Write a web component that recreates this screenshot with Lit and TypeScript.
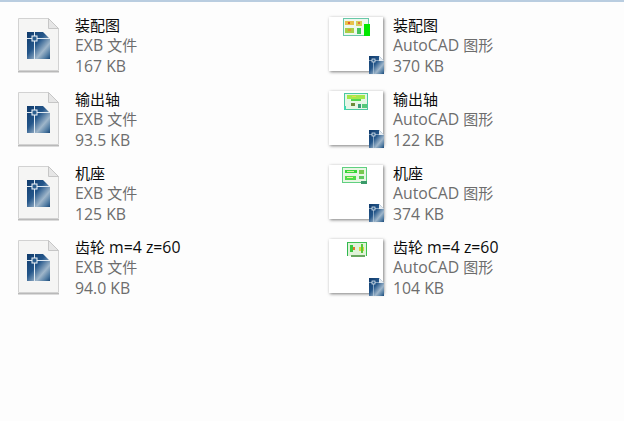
import { LitElement, html, css, svg } from "lit";
import { customElement } from "lit/decorators.js";

const blueDoc = (id: string) => svg`
  <defs>
    <linearGradient id=${id} x1="0" y1="0" x2="1" y2="1">
      <stop offset="0" stop-color="#0f3a6b"/>
      <stop offset="0.42" stop-color="#24568a"/>
      <stop offset="0.7" stop-color="#9fb6ca"/>
      <stop offset="0.88" stop-color="#4f7aa1"/>
      <stop offset="1" stop-color="#1a4878"/>
    </linearGradient>
  </defs>`;

function exbIcon(id: string) {
  return html`<svg class="file" width="43" height="56" viewBox="0 0 43 56">
    ${blueDoc(id)}
    <path d="M1.5 1.5H31.5L41.5 11.5V53.5H1.5Z" fill="#f5f5f4" stroke="#d2d2d2"/>
    <path d="M31.5 1.5V11.5H41.5Z" fill="#e6e6e6" stroke="#c6c6c6"/>
    <path d="M1 54H42V55.5H1Z" fill="#b9b9b9"/>
    <path d="M10 15H26L33 22V42H10Z" fill="url(#${id})"/>
    <path d="M17.5 15V42M10 21.5H33" stroke="#dfe9f1" stroke-width="1"/>
    <rect x="15" y="19" width="5" height="5" fill="#2c5f8f" stroke="#f2f6fa"/>
  </svg>`;
}

function badge(id: string) {
  return html`<svg class="badge" width="15" height="18" viewBox="0 0 15 18">
    ${blueDoc(id)}
    <path d="M0 0H10L15 5V18H0Z" fill="url(#${id})"/>
    <path d="M4.5 5V18M0 4.5H10" stroke="#c8d8e6" stroke-width="0.6"/>
    <path d="M10 0V5H15Z" fill="#e6ecf1"/>
    <rect x="3" y="3" width="3" height="3" fill="#2c5f8f" stroke="#f2f6fa" stroke-width="0.7"/>
  </svg>`;
}

const drawings = [
  html`<svg class="draw d0" width="27" height="19" viewBox="0 0 27 19">
    <rect x="0.5" y="0.5" width="25" height="17" fill="#eef7ee" stroke="#68c8a8"/>
    <rect x="2" y="3" width="9" height="4" fill="#e8c04a"/>
    <rect x="13" y="3" width="6" height="5" fill="#d6cf58"/>
    <rect x="2" y="10" width="9" height="5" fill="#a9cf46"/>
    <rect x="14" y="10" width="4" height="6" fill="#45c460"/>
    <rect x="21" y="6" width="6" height="12" fill="#00e800"/>
    <rect x="5" y="4" width="2" height="2" fill="#e0562e"/>
    <rect x="15" y="4" width="2" height="2" fill="#e0763e"/>
    <rect x="5" y="11" width="3" height="2" fill="#e09a30"/>
  </svg>`,
  html`<svg class="draw d1" width="24" height="17" viewBox="0 0 24 17">
    <rect x="0.5" y="0.5" width="23" height="16" fill="#e6f6e6" stroke="#4cc8a0"/>
    <rect x="3" y="2" width="18" height="4" fill="#a4e84a"/>
    <rect x="7" y="6" width="10" height="2" fill="#52d850"/>
    <rect x="7" y="10" width="4" height="3" fill="#6d8a3a"/>
    <rect x="14" y="11" width="3" height="4" fill="#3a9a7a"/>
    <rect x="18" y="11" width="5" height="4" fill="#55c878"/>
    <rect x="8" y="3" width="4" height="1" fill="#e8d84a"/>
    <rect x="0" y="13" width="2" height="4" fill="#40d8b0"/>
  </svg>`,
  html`<svg class="draw d2" width="25" height="17" viewBox="0 0 25 17">
    <rect x="0.5" y="0.5" width="24" height="15" fill="#e8f6e4" stroke="#60d080"/>
    <rect x="3" y="3" width="12" height="3" fill="#39d63c"/>
    <rect x="5" y="4" width="7" height="1" fill="#d8f0a0"/>
    <rect x="17" y="3" width="5" height="4" fill="#79c850"/>
    <rect x="3" y="9" width="11" height="4" fill="#4fdc4a"/>
    <rect x="5" y="10" width="6" height="1" fill="#e8f0a0"/>
    <rect x="17" y="9" width="5" height="3" fill="#60c860"/>
    <rect x="19" y="14" width="6" height="3" fill="#3a9a6a"/>
  </svg>`,
  html`<svg class="draw d3" width="20" height="15" viewBox="0 0 20 15">
    <rect x="0" y="0" width="20" height="14" fill="#e0f3d8"/>
    <rect x="0" y="0" width="20" height="1" fill="#3fc050"/>
    <rect x="0" y="0" width="1" height="14" fill="#30b850"/>
    <rect x="19" y="0" width="1" height="14" fill="#3fc050"/>
    <rect x="3" y="3" width="3" height="7" fill="#3cc83c"/>
    <rect x="6" y="5" width="2" height="3" fill="#e07030"/>
    <rect x="12" y="5" width="5" height="4" fill="#d8d83a"/>
    <rect x="14" y="2" width="2" height="9" fill="#58c838"/>
    <rect x="4" y="13" width="14" height="2" fill="#6aa860"/>
  </svg>`,
];

const rows = [
  { name: "装配图", a: "167 KB", b: "370 KB" },
  { name: "输出轴", a: "93.5 KB", b: "122 KB" },
  { name: "机座", a: "125 KB", b: "374 KB" },
  { name: "齿轮 m=4 z=60", a: "94.0 KB", b: "104 KB" },
];

/** Chinese runs are set a little smaller than the Latin runs around them. */
const mixed = (text: string) =>
  text
    .split(/([\u4e00-\u9fff]+)/)
    .filter(Boolean)
    .map((part) =>
      /[\u4e00-\u9fff]/.test(part) ? html`<span class="cjk">${part}</span>` : part
    );

@customElement("app-root")
export class AppRoot extends LitElement {
  static styles = css`
    :host {
      display: block;
      width: 624px;
      height: 421px;
      background: #fdfdfd;
      font-family: "Open Sans", "Noto Sans CJK SC", sans-serif;
      font-size: 15.8px;
      overflow: hidden;
    }
    .top {
      height: 2px;
      background: #b9cde0;
    }
    .grid {
      display: grid;
      grid-template-columns: 312px 295px;
      grid-auto-rows: 74px;
      padding: 14px 0 0 16px;
    }
    .item {
      display: flex;
      align-items: flex-start;
    }
    .iconbox {
      width: 59px;
      padding-top: 1px;
      flex: none;
      box-sizing: border-box;
    }
    .file {
      display: block;
      margin-left: 1px;
    }
    .thumbwrap {
      width: 65px;
      padding: 1px 0 0 1px;
      box-sizing: border-box;
      flex: none;
    }
    .thumb {
      position: relative;
      width: 54px;
      height: 54px;
      background: #fff;
      box-shadow: 1px 1px 3px rgba(0, 0, 0, 0.5);
    }
    .draw {
      display: block;
      filter: blur(0.4px);
    }
    .d0 { margin-left: 14px; padding-top: 1px; }
    .d1 { margin-left: 15px; padding-top: 2px; }
    .d2 { margin-left: 13px; padding-top: 2px; }
    .d3 { margin-left: 18px; padding-top: 3px; }
    .badge {
      position: absolute;
      right: -1px;
      bottom: -3px;
      display: block;
    }
    .text {
      display: flex;
      flex-direction: column;
      margin-top: -1px;
      white-space: nowrap;
    }
    .name {
      color: #0b0b0b;
      line-height: 20px;
    }
    .sub {
      color: #6d6d6d;
      line-height: 21px;
    }
    .cjk {
      font-size: 15px;
    }
  `;

  render() {
    return html`
      <div class="top"></div>
      <div class="grid">
        ${rows.map(
          (r, i) => html`
            <div class="item">
              <div class="iconbox">${exbIcon("g" + i)}</div>
              <div class="text">
                <span class="name">${mixed(r.name)}</span>
                <span class="sub">${mixed("EXB 文件")}</span>
                <span class="sub">${r.a}</span>
              </div>
            </div>
            <div class="item">
              <div class="thumbwrap">
                <div class="thumb">${drawings[i]}${badge("b" + i)}</div>
              </div>
              <div class="text">
                <span class="name">${mixed(r.name)}</span>
                <span class="sub">${mixed("AutoCAD 图形")}</span>
                <span class="sub">${r.b}</span>
              </div>
            </div>
          `
        )}
      </div>
    `;
  }
}
